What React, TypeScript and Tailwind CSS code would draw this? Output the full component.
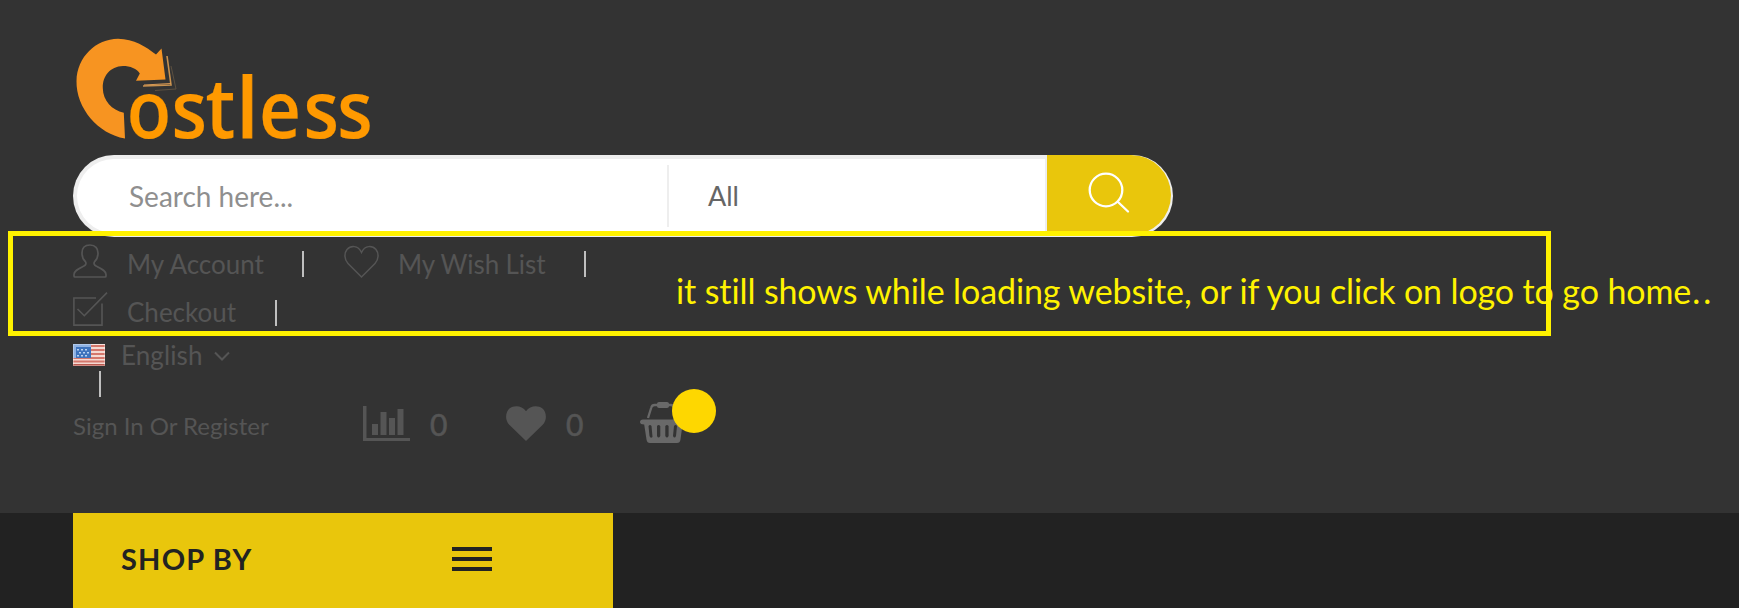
import React from 'react';

function Logo() {
  return (
    <svg className="block overflow-visible" width="330" height="125" viewBox="60 30 330 125" role="img" aria-label="Costless">
      <path
        fill="#f79421"
        d="M125 138.500 C98 134 76 108 76.500 81 C77 57 96 39 118 38.800 C134 39 146 47 156 54.500 L161.500 48.500 L165.500 79.500 L136 80.800 L139.800 73.500 C137 68.500 130 66 123 66 C110 66.500 102.500 76 102.800 88 C103 101 112 110 123.800 112.800 Z"
      />
      <path d="M167 56 L171 85 L143 86" fill="none" stroke="#c9924f" strokeWidth="1.600" />
      <path d="M144 85 L171 83.500" fill="none" stroke="#d99a55" strokeWidth="1" />
      <path d="M171 66 L176 89 L155 90.500" fill="none" stroke="#5c5040" strokeWidth="1" />
      <text
        transform="scale(.91 1)"
        y="138.500"
        x="139.200 188.500 225.800 260.200 284.500 333.500 370.500"
        fill="#ff9900"
        stroke="#ff9900"
        strokeWidth="0.200"
        fontSize="80"
        fontWeight="600"
        fontFamily="'Open Sans', 'Noto Sans', sans-serif"
      >
        os<tspan fontSize="83">t</tspan><tspan fontSize="84" strokeWidth="1">l</tspan>ess
      </text>
    </svg>
  );
}

function Divider() {
  return <span className="h-[26px] w-[2px] shrink-0 bg-[#bfbfbf]" />;
}

function SearchBar() {
  return (
    <div className="flex h-[82px] w-[1100px] overflow-hidden rounded-full bg-[#eeeeee]">
      <div className="my-[4px] ml-[4px] flex w-[968px] items-center rounded-l-full bg-white">
        <span className="w-[590px] pl-[52px] text-[28px] leading-[34px] text-[#8f8f8f]">Search here...</span>
        <span className="h-[62px] w-[2px] bg-[#eeeeee]" />
        <span className="pl-[39px] text-[27px] leading-[34px] text-[#666666]">All</span>
      </div>
      <div className="mr-[2px] mb-[2px] ml-[2px] flex flex-1 justify-center rounded-r-full bg-[#e9c60c] pt-[17px]">
        <svg width="44" height="44" viewBox="0 0 44 44" fill="none" stroke="#fff" strokeWidth="2.300" strokeLinecap="round">
          <circle cx="19" cy="18" r="16.300" />
          <path d="M31 30 L41 39.500" />
        </svg>
      </div>
    </div>
  );
}

function UserIcon() {
  return (
    <svg width="34" height="34" viewBox="0 0 34 34" fill="none" stroke="#555" strokeWidth="1.700">
      <path d="M17 1 C11.500 1 9 4.500 9 9 C9 12.500 10 15.500 12.300 17.500 C13.500 19 13 21 11 22 C5.500 24.700 1 26.500 1 30.500 V32 Q1 33 2 33 H32 Q33 33 33 32 V30.500 C33 26.500 28.500 24.700 23 22 C21 21 20.500 19 21.700 17.500 C24 15.500 25 12.500 25 9 C25 4.500 22.500 1 17 1 Z" />
    </svg>
  );
}

function HeartIcon() {
  return (
    <svg width="35" height="34" viewBox="0 0 35 34" fill="none" stroke="#555" strokeWidth="1.500">
      <path d="M17.500 32 L4 18.500 C0 14.500 .2 8 3 4.600 C6.500 .5 14 -.2 17.500 7.500 C21 -.2 28.500 .5 32 4.600 C34.800 8 35 14.500 31 18.500 Z" />
    </svg>
  );
}

function CheckIcon() {
  return (
    <svg width="35" height="34" viewBox="0 0 35 34" fill="none" stroke="#555" strokeWidth="1.600">
      <path d="M23 6 H.9 V33.100 H29 V11.500" />
      <path d="M4.500 17 L11.300 23.700 L34 .6" />
    </svg>
  );
}

function Flag() {
  return (
    <svg width="32" height="22" viewBox="0 0 32 22">
      <rect width="32" height="22" fill="#f4d9d2" />
      <g fill="#d4776c">
        <rect width="32" height="2" y="1" />
        <rect width="32" height="2" y="5" />
        <rect width="32" height="2" y="9" />
        <rect width="32" height="2" y="13" />
        <rect width="32" height="2" y="16.500" />
        <rect width="32" height="2" y="20" fill="#b9594f" />
      </g>
      <rect width="18" height="14" fill="#8fb2e3" />
      <rect x="3" y="3" width="15" height="11" fill="#3d73bd" />
      <g fill="#b8d2f2">
        <rect x="4" y="5" width="2" height="1.500" />
        <rect x="8" y="5" width="2" height="1.500" />
        <rect x="12" y="5" width="2" height="1.500" />
        <rect x="6" y="8" width="2" height="1.500" />
        <rect x="10" y="8" width="2" height="1.500" />
        <rect x="14" y="8" width="2" height="1.500" />
        <rect x="4" y="11" width="2" height="1.500" />
        <rect x="8" y="11" width="2" height="1.500" />
        <rect x="12" y="11" width="2" height="1.500" />
      </g>
      <rect x=".5" y=".5" width="31" height="21" fill="none" stroke="#fff" strokeOpacity=".3" />
    </svg>
  );
}

function ChartIcon() {
  return (
    <svg width="47" height="35" viewBox="0 0 47 35" fill="#555">
      <path d="M0 0 H3.500 V32 H47 V35 H0 Z" />
      <rect x="9" y="18" width="6" height="11" />
      <rect x="17.500" y="6" width="6" height="23" />
      <rect x="26" y="12" width="6" height="17" />
      <rect x="34.500" y="3" width="6" height="26" />
    </svg>
  );
}

function SolidHeart() {
  return (
    <svg width="40" height="35" viewBox="0 0 40 35" fill="#555">
      <path d="M20 35 L3.500 19 C-1.500 14 -.5 6 3.500 2.600 C8 -1.200 16 -.6 20 5.300 C24 -.6 32 -1.200 36.500 2.600 C40.500 6 41.500 14 36.500 19 Z" />
    </svg>
  );
}

function Basket() {
  return (
    <svg width="44" height="41" viewBox="0 0 44 41">
      <path d="M8 16 L11.300 5.500 Q12 3 14.500 3 H31 Q33.500 3 34 5.500 L37 16" fill="none" stroke="#696969" strokeWidth="2.300" />
      <rect x="17" y="0" width="12" height="6" rx="2" fill="#696969" />
      <path
        fillRule="evenodd"
        fill="#696969"
        d="M3 17.500 H41 Q44 17.500 44 20 Q44 22.500 42.500 22.500 L40.500 37.500 Q40 41 37 41 H10 Q7 41 6.500 37.500 L4.200 22.500 Q0 22.500 0 20 Q0 17.500 3 17.500 Z M8.500 24 L9.500 34 Q10.500 37 12.500 35 L11.500 24 Q10 22 8.500 24 Z M17 24 V34 Q18.500 37 20.300 34 V24 Q18.500 22 17 24 Z M25.300 24 V34 Q27 37 28.600 34 V24 Q27 22 25.300 24 Z M34 24 L33 34 Q34.500 37 36 34 L37 24 Q35.500 22 34 24 Z"
      />
    </svg>
  );
}

export default function App() {
  return (
    <div className="relative h-[616px] w-[1739px] overflow-hidden bg-white font-['Lato',sans-serif] whitespace-nowrap text-[#555555]">
      <header className="h-[513px] bg-[#333333] pt-[30px]">
        <div className="h-[125px] pl-[60px]">
          <Logo />
        </div>
        <div className="pl-[73px]">
          <SearchBar />
          <div className="flex h-[48px] items-start pt-[7px]">
            <UserIcon />
            <span className="ml-[20px] w-[175px] pt-[3px] text-[26px] leading-[34px]">My Account</span>
            <span className="flex pt-[7px]"><Divider /></span>
            <span className="ml-[40px] flex pt-[1px]"><HeartIcon /></span>
            <span className="ml-[19px] w-[186px] pt-[3px] text-[26px] leading-[34px] tracking-[-0.100px]">My Wish List</span>
            <span className="flex pt-[7px]"><Divider /></span>
          </div>
          <div className="flex h-[54px] items-start pt-[7px]">
            <CheckIcon />
            <span className="ml-[19px] w-[148px] pt-[3px] text-[26px] leading-[34px]">Checkout</span>
            <span className="flex pt-[8px]"><Divider /></span>
          </div>
          <div className="flex h-[32px] items-start">
            <span className="pt-[5px]"><Flag /></span>
            <span className="-mt-[1px] ml-[16px] w-[93px] text-[26px] leading-[34px] tracking-[0.100px]">English</span>
            <svg className="mt-[12px]" width="16" height="12" viewBox="0 0 16 12" fill="none" stroke="#555" strokeWidth="2">
              <path d="M1 1.500 L8 8.500 L15 1.500" />
            </svg>
          </div>
          <div className="flex h-[26px] pl-[26px]"><Divider /></div>
          <div className="flex h-[50px] items-start pt-[5px]">
            <span className="mt-[7px] w-[290px] text-[24px] leading-[34px]">Sign In Or Register</span>
            <span className="mt-[4px]"><ChartIcon /></span>
            <span className="mt-[5px] ml-[20px] w-[76px] text-[30px] leading-[34px] [-webkit-text-stroke:0.600px_#555555]">0</span>
            <span className="mt-[4px]"><SolidHeart /></span>
            <span className="mt-[5px] ml-[20px] w-[74px] text-[30px] leading-[34px] [-webkit-text-stroke:0.600px_#555555]">0</span>
            <span className="relative">
              <Basket />
              <span className="absolute -top-[13px] left-[32px] size-[44px] rounded-full bg-[#fed700]" />
            </span>
          </div>
        </div>
      </header>
      <nav className="flex h-[95px] bg-[#222222] pl-[73px]">
        <div className="flex w-[540px] items-center bg-[#e9c60c] pb-[3px] pl-[48px]">
          <span className="w-[331px] text-[29px] leading-[34px] font-bold tracking-[1.200px] text-[#222222]">SHOP BY</span>
          <span className="flex flex-col gap-[6px]">
            <span className="h-[4px] w-[40px] bg-[#222222]" />
            <span className="h-[4px] w-[40px] bg-[#222222]" />
            <span className="h-[4px] w-[40px] bg-[#222222]" />
          </span>
        </div>
      </nav>
      <div className="absolute top-[231px] left-[8px] h-[105px] w-[1543px] border-[5px] border-[#fff200]" />
      <p className="absolute top-[271px] left-[676px] text-[34px] leading-[40px] tracking-[-0.110px] text-[#fff200] [font-variant-ligatures:none]">
        it still shows while loading website, or if you click on logo to go home<span className="pl-[1px] tracking-[3px]">..</span>
      </p>
    </div>
  );
}
